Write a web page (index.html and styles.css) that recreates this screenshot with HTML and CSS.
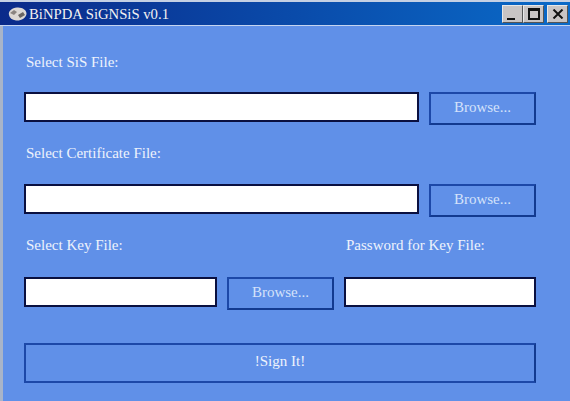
FILE: index.html
```html
<!DOCTYPE html>
<html lang="en">

<head>
    <meta charset="UTF-8">
    <title>BiNPDA SiGNSiS v0.1</title>
    <link rel="stylesheet" href="styles.css">
</head>

<body>
    <div class="window">
        <div class="titlebar">
            <svg class="app-icon" width="19" height="14" viewBox="0 0 19 14">
                <path d="M1 8 C0 4 4 1 9 0.5 C14 0 19 3 18.5 7 C18 11 13 14 8 13.5 C4 13 1.5 11 1 8 Z" fill="#dcd8d4"/>
                <path d="M2 6 L6 3 L9 5 L6 8 Z" fill="#8a8480"/>
                <path d="M10 8 L15 5 L17 8 L12 11 Z" fill="#6a6562"/>
            </svg>
            <span class="title">BiNPDA SiGNSiS v0.1</span>
            <div class="controls">
                <div class="ctl"><span class="min-mark"></span></div>
                <div class="ctl"><span class="max-mark"></span></div>
                <div class="ctl close"><svg width="12" height="10" viewBox="0 0 12 10"><path d="M1.5 0.5 L10.5 9.5 M10.5 0.5 L1.5 9.5" stroke="#111" stroke-width="2"/></svg></div>
            </div>
        </div>
        <div class="body">
            <div class="label">Select SiS File:</div>
            <div class="row row-first">
                <div class="field wide"></div>
                <button class="browse">Browse...</button>
            </div>
            <div class="label">Select Certificate File:</div>
            <div class="row">
                <div class="field wide"></div>
                <button class="browse">Browse...</button>
            </div>
            <div class="label-row">
                <div class="label key-label">Select Key File:</div>
                <div class="label">Password for Key File:</div>
            </div>
            <div class="row row-key">
                <div class="field narrow"></div>
                <button class="browse">Browse...</button>
                <div class="field narrow last"></div>
            </div>
            <button class="sign">!Sign It!</button>
        </div>
    </div>
</body>

</html>
```

FILE: styles.css
```css
html, body {
    margin: 0;
    padding: 0;
}

.window {
    width: 570px;
    height: 401px;
    overflow: hidden;
    background-color: #6090e8;
    font-family: "Liberation Serif", serif;
    color: #eef3fc;
}

.titlebar {
    height: 26px;
    display: flex;
    align-items: center;
    box-sizing: border-box;
    padding: 0 2px 0 8px;
    background: linear-gradient(to right, #0a2a8a, #0a6ac8);
    border-top: 2px solid #c4d0e4;
    border-bottom: 1px solid #c4d4f0;
}

.app-icon {
    margin-right: 2px;
}

.title {
    color: #f2f2f2;
    font-size: 14.7px;
    padding-top: 1px;
    flex: 1;
}

.controls {
    display: flex;
}

.ctl {
    width: 21px;
    height: 18px;
    box-sizing: border-box;
    background-color: #c8c4c4;
    border: 1px solid #e8e8e8;
    border-right-color: #555;
    border-bottom-color: #555;
    display: flex;
    align-items: center;
    justify-content: center;
}

.close {
    margin-left: 3px;
}

.min-mark {
    width: 8px;
    height: 2px;
    background-color: #111;
    margin-top: 10px;
    margin-right: 3px;
}

.max-mark {
    width: 12px;
    height: 12px;
    box-sizing: border-box;
    border: 2px solid #111;
    border-top-width: 3px;
}

.body {
    height: 375px;
    box-sizing: border-box;
    padding: 27px 34px 0 21px;
    border-left: 3px solid #a8b4c8;
}

.label {
    font-size: 15px;
    height: 18px;
    line-height: 18px;
    padding-left: 2px;
}

.label-row {
    display: flex;
}

.key-label {
    width: 318px;
}

.row {
    display: flex;
    align-items: flex-start;
    gap: 10px;
    margin-top: 22px;
    margin-bottom: 19px;
}

.row-first {
    margin-top: 21px;
}

.row-key {
    margin-top: 23px;
}

.field {
    height: 30px;
    box-sizing: border-box;
    background-color: #fff;
    border: 2px solid #0a1040;
}

.wide {
    width: 395px;
}

.narrow {
    width: 193px;
}

.last {
    width: 192px;
}

.browse {
    width: 107px;
    height: 33px;
    box-sizing: border-box;
    padding: 0 0 2px;
    background-color: #6090e8;
    border: 2px solid #1c48a8;
    border-right-color: #123a90;
    border-bottom-color: #123a90;
    color: #d4e2fa;
    font-family: "Liberation Serif", serif;
    font-size: 15px;
}

.sign {
    display: block;
    width: 512px;
    height: 40px;
    margin-top: 33px;
    box-sizing: border-box;
    padding: 0 0 4px;
    background-color: #6090e8;
    border: 2px solid #1c48a8;
    border-right-color: #123a90;
    color: #eef3fc;
    font-family: "Liberation Serif", serif;
    font-size: 15px;
}
```
